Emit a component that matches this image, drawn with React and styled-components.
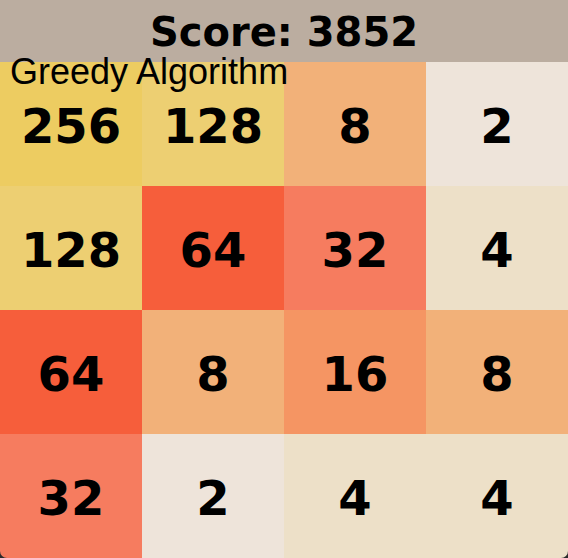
import React from 'react';
import styled, { createGlobalStyle } from 'styled-components';

const BOARD = [
  [256, 128, 8, 2],
  [128, 64, 32, 4],
  [64, 8, 16, 8],
  [32, 2, 4, 4],
];

const TILE_COLORS = {
  2: '#eee4da',
  4: '#ede0c8',
  8: '#f2b179',
  16: '#f59563',
  32: '#f67c5f',
  64: '#f65e3b',
  128: '#edcf72',
  256: '#edcc61',
};

export default function App() {
  return (
    <>
      <GlobalStyle />
      <Game>
        <Header>Score: 3852</Header>
        <Board>
          {BOARD.flat().map((value, i) => (
            <Tile key={i} color={TILE_COLORS[value]}>
              {value}
            </Tile>
          ))}
          <Label>Greedy Algorithm</Label>
        </Board>
      </Game>
    </>
  );
}

const GlobalStyle = createGlobalStyle`
  body {
    margin: 0;
    background: #2b2b2b;
  }
`;

const Game = styled.div`
  width: 568px;
  height: 558px;
  overflow: hidden;
  border-radius: 0 0 7px 7px;
`;

const Header = styled.div`
  height: 62px;
  background: #bbada0;
  font-family: 'DejaVu Sans', sans-serif;
  font-weight: bold;
  font-size: 40px;
  text-align: center;
  line-height: 64px;
  color: #000;
`;

const Board = styled.div`
  position: relative;
  display: grid;
  grid-template-columns: repeat(4, 142px);
  grid-template-rows: repeat(4, 124px);
`;

const Tile = styled.div`
  display: flex;
  align-items: center;
  justify-content: center;
  padding-top: 3px;
  background: ${props => props.color};
  font-family: 'DejaVu Sans', sans-serif;
  font-weight: bold;
  font-size: 48px;
  color: #000;
`;

const Label = styled.div`
  position: absolute;
  top: -11px;
  left: 10px;
  font-family: 'Liberation Sans', Arial, sans-serif;
  font-size: 36px;
  line-height: normal;
  color: #000;
  white-space: nowrap;
`;
